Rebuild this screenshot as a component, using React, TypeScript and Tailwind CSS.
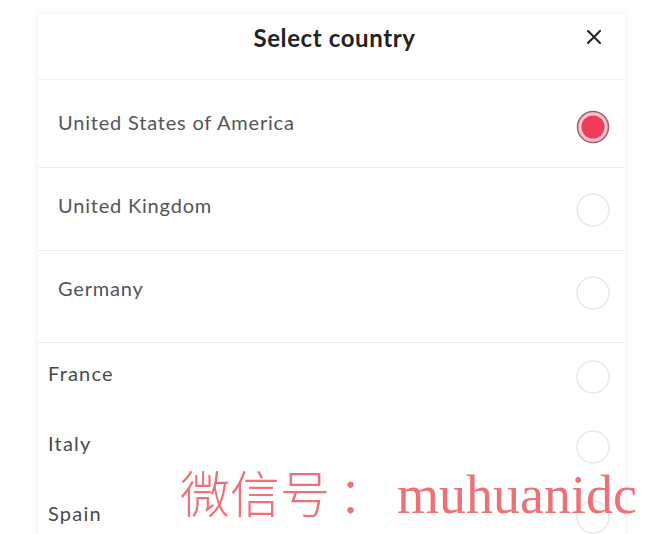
const top = [
  { name: "United States of America", h: "h-[88px] pt-[30px]", selected: true },
  { name: "United Kingdom", h: "h-[83px] pt-[25px]", selected: false },
  { name: "Germany", h: "h-[91px] pt-[25px]", selected: false },
];

const more = ["France", "Italy", "Spain"];

function Radio({ on }: { on?: boolean }) {
  if (on) {
    return (
      <svg width="34" height="34" viewBox="0 0 34 34" className="shrink-0">
        <circle cx="17" cy="17" r="15.5" fill="#f7c3cc" stroke="#a4606f" strokeWidth="1.6" />
        <circle cx="17" cy="17" r="11.5" fill="#ee3d58" />
      </svg>
    );
  }
  return (
    <svg width="34" height="34" viewBox="0 0 34 34" className="shrink-0">
      <circle cx="17" cy="17" r="16" fill="none" stroke="#e8e8e8" strokeWidth="1.5" />
    </svg>
  );
}

export default function App() {
  return (
    <div className="relative h-[534px] w-full overflow-hidden bg-white font-['Lato','Liberation_Sans',sans-serif]">
      <div className="ml-[38px] mt-[14px] w-[587px] bg-white shadow-[0_0_8px_rgba(0,0,0,0.07)]">
        {/* header */}
        <div className="relative flex h-[66px] items-start justify-center border-b border-[#f1f1f1] pl-[6px] pt-[10px]">
          <h1 className="text-[24px] leading-[28px] font-bold tracking-[0.6px] text-[#222]">Select country</h1>
          <svg className="absolute right-[24px] top-[16px]" width="14" height="14" viewBox="0 0 14 14">
            <path d="M1 1L13 13M13 1L1 13" stroke="#222" strokeWidth="2" strokeLinecap="round" />
          </svg>
        </div>

        <div className="divide-y divide-[#ededed]">
          {top.map((c) => (
            <div key={c.name} className={`flex items-start justify-between pl-5 pr-[15px] ${c.h}`}>
              <span className="text-[20px] leading-[24px] tracking-[0.8px] text-[#555]">{c.name}</span>
              <Radio on={c.selected} />
            </div>
          ))}
        </div>

        <div className="border-t border-[#ececec]">
          {more.map((name) => (
            <div key={name} className="flex h-[70px] items-start justify-between pl-[10px] pr-[15px] pt-[17px]">
              <span className="mt-[2px] text-[20px] leading-[22px] tracking-[1.2px] text-[#4a4a4a]">{name}</span>
              <Radio />
            </div>
          ))}
        </div>
      </div>

      {/* watermark */}
      <div className="absolute left-[180px] top-[454px] flex items-baseline whitespace-nowrap text-[#ec7179]">
        <span className="font-['Noto_Sans_CJK_SC',serif] text-[50px] font-light">微信号</span>
        <span className="ml-[8px] font-['Noto_Sans_CJK_SC',serif] text-[50px] font-light">：</span>
        <span className="ml-[9px] font-['Liberation_Serif',serif] text-[54px]">muhuanidc</span>
      </div>
    </div>
  );
}
